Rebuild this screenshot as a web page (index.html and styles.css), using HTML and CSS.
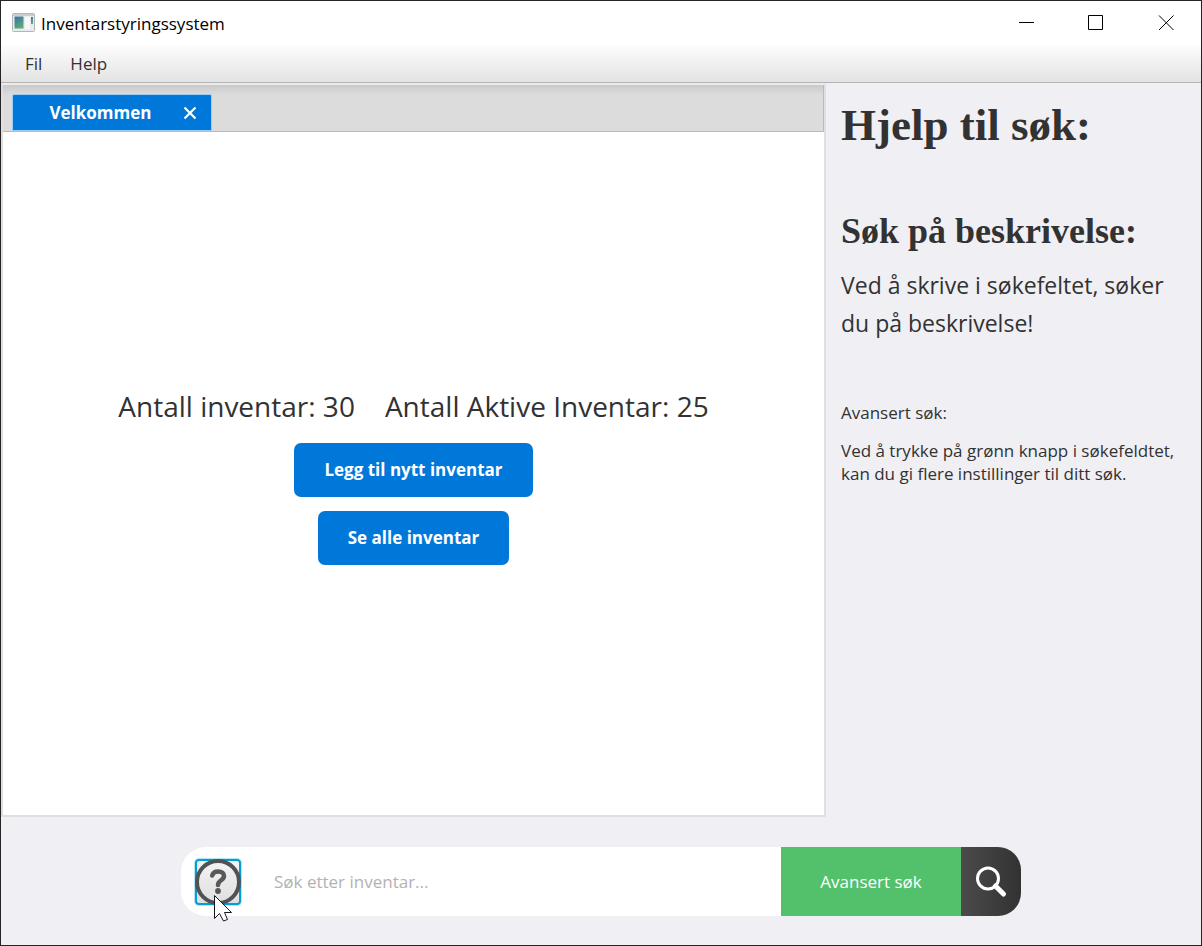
FILE: index.html
```html
<!DOCTYPE html>
<html lang="no">
<head>
<meta charset="utf-8">
<title>Inventarstyringssystem</title>
<link rel="stylesheet" href="styles.css">
</head>
<body>
<div class="window">
  <header class="titlebar">
    <svg class="app-icon" width="24" height="20" viewBox="0 0 24 20" aria-hidden="true">
      <defs><linearGradient id="screen" x1="0" y1="0" x2="0.5" y2="1"><stop offset="0" stop-color="#3d6fa5"/><stop offset="1" stop-color="#58ad78"/></linearGradient></defs>
      <rect x="0.5" y="0.5" width="22" height="18" rx="1" fill="#e9ecee" stroke="#b0b5ba"/>
      <rect x="1" y="1" width="21" height="2" fill="#c9ced2"/>
      <rect x="2.500" y="3.500" width="9" height="12" fill="url(#screen)"/>
      <rect x="13" y="4" width="5" height="12" fill="#f8f8f8"/>
      <rect x="19" y="4" width="2" height="7" fill="url(#screen)"/>
    </svg>
    <span class="window-title">Inventarstyringssystem</span>
    <div class="window-controls">
      <button class="window-button" type="button" aria-label="Minimer"><svg width="16" height="16" viewBox="0 0 16 16"><path d="M1 7.500H16" stroke="#000" fill="none"/></svg></button>
      <button class="window-button" type="button" aria-label="Maksimer"><svg width="16" height="16" viewBox="0 0 16 16"><path d="M.5 .5H14.500V14.500H.5Z" stroke="#000" fill="none"/></svg></button>
      <button class="window-button" type="button" aria-label="Lukk"><svg width="16" height="16" viewBox="0 0 16 16"><path d="M1 .5L15.500 15M15.500 .5L1 15" stroke="#000" fill="none"/></svg></button>
    </div>
  </header>
  <nav class="menubar">
    <button class="menu" type="button">Fil</button>
    <button class="menu" type="button">Help</button>
  </nav>
  <main class="content">
    <section class="tab-pane">
      <div class="tab-strip">
        <div class="tab">
          <button class="tab-label" type="button">Velkommen</button>
          <button class="tab-close" type="button" aria-label="Lukk fane"><svg width="14" height="14" viewBox="0 0 14 14"><path d="M1.500 1.500L12.500 12.500M12.500 1.500L1.500 12.500" stroke="#fff" stroke-width="2.200" fill="none"/></svg></button>
        </div>
      </div>
      <div class="welcome">
        <div class="stats"><span>Antall inventar: 30</span><span>Antall Aktive Inventar: 25</span></div>
        <button class="primary" type="button">Legg til nytt inventar</button>
        <button class="primary" type="button">Se alle inventar</button>
      </div>
    </section>
    <aside class="help">
      <h1 class="help-title">Hjelp til søk:</h1>
      <h2 class="help-subtitle">Søk på beskrivelse:</h2>
      <p class="help-lead">Ved å skrive i søkefeltet, søker du på beskrivelse!</p>
      <p class="help-text help-label">Avansert søk:</p>
      <p class="help-text">Ved å trykke på grønn knapp i søkefeldtet, kan du gi flere instillinger til ditt søk.</p>
    </aside>
  </main>
  <footer class="footer">
    <form class="search">
      <div class="search-field">
        <button class="help-button" type="button" aria-label="Hjelp">
          <svg width="46" height="46" viewBox="0 0 46 46" aria-hidden="true">
            <circle cx="23" cy="23" r="21" fill="none" stroke="#4f5355" stroke-width="4"/>
            <path d="M17.200 16.500C18 13.500 20 12.500 23 12.500C27 12.500 29 14.500 29 17C29 21.500 23 21 23 26" fill="none" stroke="#585858" stroke-width="4.500" stroke-linecap="round"/>
            <circle cx="23" cy="32" r="2.900" fill="#585858"/>
          </svg>
          <svg class="cursor" width="20" height="28" viewBox="0 0 20 28" aria-hidden="true"><path d="M1.500 1.500V24.500L6.500 19.500L10.500 27L14.500 25.500L11.500 18.500H18.500Z" fill="#fff" stroke="#15151f"/></svg>
        </button>
        <input class="search-input" type="text" aria-label="Søk etter inventar" placeholder="Søk etter inventar...">
      </div>
      <button class="advanced" type="button">Avansert søk</button>
      <button class="search-submit" type="submit" aria-label="Søk"><svg width="34" height="34" viewBox="0 0 34 34"><circle cx="14" cy="13.500" r="10.500" fill="none" stroke="#fff" stroke-width="3"/><path d="M21.500 21L29.500 29" stroke="#fff" stroke-width="5" stroke-linecap="round"/></svg></button>
    </form>
  </footer>
</div>
</body>
</html>
```
FILE: styles.css
```css
* { box-sizing: border-box; }
body { margin: 0; font-family: "Open Sans", "Noto Sans", sans-serif; font-size: 17px; color: #323232; }
button, input { font: inherit; color: inherit; margin: 0; padding: 0; border: 0; background: none; }
svg { display: block; }
.window { min-height: 100vh; display: flex; flex-direction: column; border: 1px solid #252427; background: #f0eff4; }
.titlebar { display: flex; align-items: center; height: 44px; padding-left: 11px; background: #fff; color: #000; }
.window-title { flex: 1; padding-left: 5px; }
.window-controls { display: flex; }
.window-button { width: 70px; height: 44px; display: flex; align-items: center; justify-content: center; }
.menubar { display: flex; gap: 28px; height: 38px; padding: 0 24px; background: linear-gradient(#fdfdfd, #e3e3e3); border-bottom: 1px solid #b5b5b5; }
.content { flex: 1; display: grid; grid-template-columns: minmax(0, 1fr) 375px; }
.tab-pane { display: flex; flex-direction: column; border: 2px solid #dfdfe0; border-top-color: #ececec; background: #fff; }
.tab-strip { height: 47px; padding: 9px; background: linear-gradient(#cacaca, #dcdcdc 10px); border-right: 1px solid #bababa; border-bottom: 1px solid #bababa; }
.tab { width: 200px; height: 37px; display: flex; align-items: center; border: 1px solid #9fcdf2; border-radius: 2px 2px 0 0; background: #0078d9; color: #fff; }
.tab-label { flex: 1; padding-left: 5px; font-weight: 700; }
.tab-close { padding-right: 14px; }
.welcome { flex: 1; display: flex; flex-direction: column; align-items: center; justify-content: center; gap: 14px; }
.stats { display: flex; gap: 30px; font-size: 28px; line-height: 46px; }
.primary { height: 54px; padding: 0 30px; border-radius: 7px; background: #0078d9; color: #fff; font-weight: 700; }
.help { padding: 14px 15px; }
.help-title, .help-subtitle { margin: 0; font-family: "Liberation Serif", serif; font-weight: 700; }
.help-title { font-size: 45px; line-height: 56px; }
.help-subtitle { margin-top: 56px; font-size: 36px; line-height: 44px; }
.help-lead { margin: 13px 0 0; font-size: 23px; line-height: 38px; }
.help-text { margin: 15px 0 0; line-height: 23px; }
.help-label { margin-top: 59px; }
.footer { display: flex; justify-content: center; padding: 30px 15px 29px; }
.search { display: flex; flex: 0 1 840px; height: 69px; }
.search-field { flex: 1; min-width: 0; display: flex; align-items: center; gap: 33px; padding-left: 14px; border-radius: 25px 0 0 25px; background: #fff; }
.help-button { position: relative; flex: none; border-radius: 4px; background: linear-gradient(#f4f4f4, #dedede); box-shadow: inset 0 0 0 2px #039ed3, 0 0 0 1px #b5e4f3; }
.cursor { position: absolute; left: 18px; top: 35px; }
.search-input { flex: 1; min-width: 0; height: 44px; outline: 0; }
.search-input::placeholder { color: #b2b2b2; opacity: 1; }
.advanced { width: 180px; background: #53c06c; color: #fff; }
.search-submit { width: 60px; display: flex; align-items: center; justify-content: center; border-radius: 0 23px 23px 0; background: linear-gradient(90deg, #4b4b4b, #323232); }
```
